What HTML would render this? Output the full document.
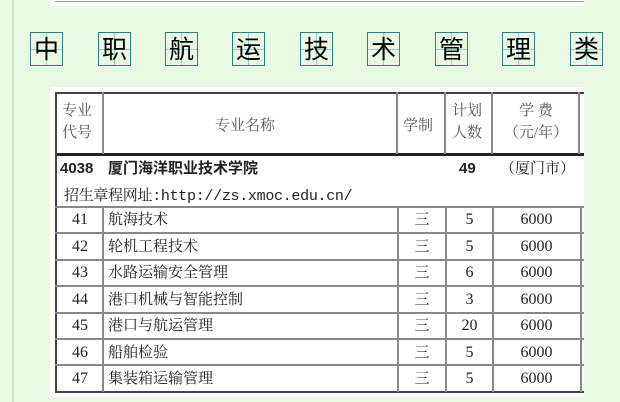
<!DOCTYPE html>
<html><head><meta charset="utf-8"><style>
body{margin:0;width:620px;height:402px;background:#e9f9e3;position:relative;overflow:hidden;font-family:"Liberation Serif","Noto Serif CJK SC",serif;color:#222}
.vl{position:absolute;left:12px;top:0;width:2px;height:402px;background:#cfe6c8}
.topbox{position:absolute;left:50px;top:0;width:534px;height:6px;background:#fff}
.topbox div{position:absolute;left:5px;right:0;top:1px;height:1px;background:#999}
.t{position:absolute;top:32px;width:33px;height:34px;border:1px solid #2e7f82;font:25px "Liberation Sans","Noto Sans CJK SC",sans-serif;text-align:center;line-height:34px;color:#000;box-sizing:border-box;background:linear-gradient(#9cc 0 0) center/1px 100% no-repeat,linear-gradient(#9cc 0 0) center/100% 1px no-repeat;}
.wrap{position:absolute;left:50px;top:87px;width:534px;height:310px;background:#fff}
.h{position:absolute;background:#888}
.c{position:absolute;font-size:14px;white-space:nowrap}
.b{font-family:"Liberation Sans","Noto Sans CJK SC",sans-serif;font-weight:bold;font-size:14px}
.r{position:absolute;left:0;width:620px;height:26px;line-height:26px;font-size:15px}
.r span{position:absolute;white-space:nowrap;text-align:center}
.r .n{left:57px;width:46px;font-size:16px}
.r .m{left:108px;font-size:15px}
.r .x{left:398px;width:48px}
.r .p{left:446px;width:47px;font-size:16px}
.r .f{left:493px;width:87px;font-size:16px}
</style></head><body>
<div class="vl"></div>
<div class="topbox"><div></div></div>
<div class="t" style="left:30px">中</div>
<div class="t" style="left:98px">职</div>
<div class="t" style="left:165px">航</div>
<div class="t" style="left:232px">运</div>
<div class="t" style="left:300px">技</div>
<div class="t" style="left:367px">术</div>
<div class="t" style="left:435px">管</div>
<div class="t" style="left:502px">理</div>
<div class="t" style="left:570px">类</div>
<div class="wrap"></div>
<div class="h" style="left:55px;top:92px;width:529px;height:2px;background:#444"></div>
<div class="h" style="left:55px;top:153px;width:529px;height:3px;background:#222"></div>
<div class="h" style="left:55px;top:92px;width:2px;height:301px;background:#444"></div>
<div class="h" style="left:55px;top:391px;width:529px;height:2px;background:#444"></div>
<div class="h" style="left:102px;top:92px;width:2px;height:62px"></div>
<div class="h" style="left:396px;top:92px;width:2px;height:62px"></div>
<div class="h" style="left:444px;top:92px;width:2px;height:62px"></div>
<div class="h" style="left:491px;top:92px;width:2px;height:62px"></div>
<div class="h" style="left:578px;top:92px;width:2px;height:62px"></div>
<div class="h" style="left:102px;top:207px;width:2px;height:185px"></div>
<div class="h" style="left:397px;top:207px;width:2px;height:185px"></div>
<div class="h" style="left:445px;top:207px;width:2px;height:185px"></div>
<div class="h" style="left:492px;top:207px;width:2px;height:185px"></div>
<div class="h" style="left:580px;top:207px;width:2px;height:185px"></div>
<div class="h" style="left:55px;top:206px;width:529px;height:2px"></div>
<div class="h" style="left:55px;top:232px;width:529px;height:2px"></div>
<div class="h" style="left:55px;top:259px;width:529px;height:2px"></div>
<div class="h" style="left:55px;top:285px;width:529px;height:2px"></div>
<div class="h" style="left:55px;top:312px;width:529px;height:2px"></div>
<div class="h" style="left:55px;top:338px;width:529px;height:2px"></div>
<div class="h" style="left:55px;top:364px;width:529px;height:2px"></div>
<div class="c" style="left:62px;top:100px;line-height:22px;color:#555;font-size:15px">专业<br>代号</div>
<div class="c" style="left:215px;top:114px;color:#555;font-size:15px">专业名称</div>
<div class="c" style="left:403px;top:114px;color:#555;font-size:15px">学制</div>
<div class="c" style="left:452px;top:100px;line-height:22px;color:#555;font-size:15px">计划<br>人数</div>
<div class="c" style="left:493px;top:100px;line-height:22px;color:#555;text-align:center;width:86px;font-size:15px">学 费<br>（元/年）</div>
<div style="position:absolute;left:0;top:158px;width:620px;height:22px;line-height:22px">
<span class="c b" style="left:60px;font-size:15px">4038</span>
<span class="c b" style="left:108px;font-size:15px">厦门海洋职业技术学院</span>
<span class="c b" style="left:459px;font-size:15px">49</span>
<span class="c" style="left:500px;font-size:15px">（厦门市）</span>
</div>
<div class="c" style="left:64px;top:184px;font-family:'Liberation Mono','Noto Serif CJK SC',monospace;font-size:15px;letter-spacing:-0.3px">招生章程网址:http://zs.xmoc.edu.cn/</div>
<div class="r" style="top:207px"><span class="n">41</span><span class="m">航海技术</span><span class="x">三</span><span class="p">5</span><span class="f">6000</span></div>
<div class="r" style="top:233.5px"><span class="n">42</span><span class="m">轮机工程技术</span><span class="x">三</span><span class="p">5</span><span class="f">6000</span></div>
<div class="r" style="top:260px"><span class="n">43</span><span class="m">水路运输安全管理</span><span class="x">三</span><span class="p">6</span><span class="f">6000</span></div>
<div class="r" style="top:286.5px"><span class="n">44</span><span class="m">港口机械与智能控制</span><span class="x">三</span><span class="p">3</span><span class="f">6000</span></div>
<div class="r" style="top:313px"><span class="n">45</span><span class="m">港口与航运管理</span><span class="x">三</span><span class="p">20</span><span class="f">6000</span></div>
<div class="r" style="top:339.5px"><span class="n">46</span><span class="m">船舶检验</span><span class="x">三</span><span class="p">5</span><span class="f">6000</span></div>
<div class="r" style="top:366px"><span class="n">47</span><span class="m">集装箱运输管理</span><span class="x">三</span><span class="p">5</span><span class="f">6000</span></div>
</body></html>
